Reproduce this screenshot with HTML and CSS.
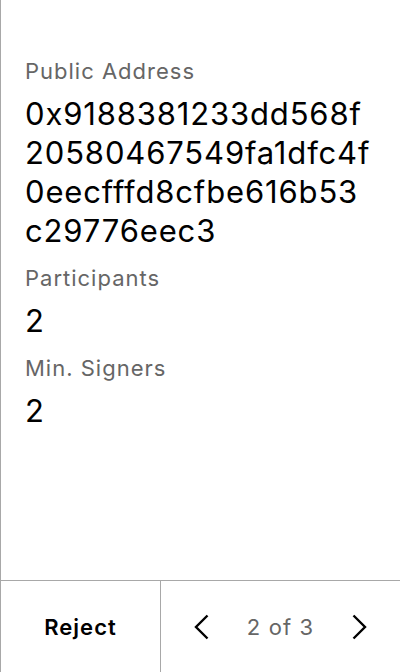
FILE: index.html
```html
<!DOCTYPE html>
<html>
<head>
<meta charset="utf-8">
<link rel="stylesheet" href="styles.css">
</head>
<body>
<div class="screen">
  <div class="content">
    <div class="label">Public Address</div>
    <div class="value address">0x9188381233dd568f<br>20580467549fa1dfc4f<br>0eecfffd8cfbe616b53<br>c29776eec3</div>
    <div class="label">Participants</div>
    <div class="value">2</div>
    <div class="label">Min. Signers</div>
    <div class="value">2</div>
  </div>
  <div class="footer">
    <div class="reject">Reject</div>
    <div class="pager">
      <svg class="chev" width="16" height="26" viewBox="0 0 16 26"><path d="M14.5 1.5 L3 13 L14.5 24.5" fill="none" stroke="#000" stroke-width="2.4"/></svg>
      <span class="count">2 of 3</span>
      <svg class="chev" width="16" height="26" viewBox="0 0 16 26"><path d="M1.5 1.5 L13 13 L1.5 24.5" fill="none" stroke="#000" stroke-width="2.4"/></svg>
    </div>
  </div>
</div>
</body>
</html>
```

FILE: styles.css
```css
html, body {
  margin: 0;
  padding: 0;
  background: #fff;
}
body {
  font-family: Inter, "Noto Sans", sans-serif;
  color: #000;
}
.screen {
  width: 400px;
  height: 672px;
  box-sizing: border-box;
  border-left: 1px solid #a8a8a8;
  display: flex;
  flex-direction: column;
}
.content {
  flex: 1;
  padding: 56px 24px 0 24px;
}
.label {
  font-size: 22px;
  line-height: 30px;
  letter-spacing: 1px;
  color: #666;
  margin-bottom: 8px;
}
.value {
  font-size: 31px;
  line-height: 39px;
  letter-spacing: 0.85px;
  margin-bottom: 13px;
  white-space: nowrap;
}
.footer {
  height: 92px;
  box-sizing: border-box;
  border-top: 1px solid #a8a8a8;
  display: grid;
  grid-template-columns: 160px 1fr;
}
.reject {
  border-right: 1px solid #a8a8a8;
  display: flex;
  align-items: center;
  justify-content: center;
  font-size: 22px;
  font-weight: 600;
  letter-spacing: 1px;
}
.pager {
  display: flex;
  align-items: center;
  justify-content: space-between;
  padding: 0 32px;
}
.chev {
  display: block;
}
.count {
  font-size: 22px;
  letter-spacing: 1.1px;
  color: #666;
}
```
